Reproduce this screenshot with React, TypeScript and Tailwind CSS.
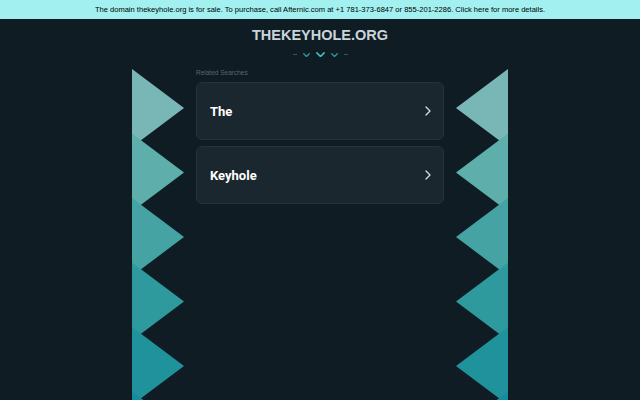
import React from "react";

const colors = ["#79b7b6", "#5eafac", "#45a4a3", "#2e9a9d", "#1f929c", "#168b9c"];

function Strip({ side }: { side: "left" | "right" }) {
  const tops = [0, 64.5, 129, 193.5, 258, 322.5];
  return (
    <svg width="52" height="331" viewBox="0 0 52 331" className="block shrink-0">
      {tops.map((t, i) => (
        <polygon
          key={i}
          fill={colors[i]}
          points={
            side === "left"
              ? `0,${t} 52,${t + 39} 0,${t + 78}`
              : `52,${t} 0,${t + 39} 52,${t + 78}`
          }
        />
      ))}
    </svg>
  );
}

function Chevron({ size, color }: { size: number; color: string }) {
  return (
    <svg width={size} height={size * 0.6} viewBox="0 0 10 6" fill="none">
      <path d="M1 1 L5 5 L9 1" stroke={color} strokeWidth="1.8" strokeLinecap="round" strokeLinejoin="round" />
    </svg>
  );
}

function Card({ label }: { label: string }) {
  return (
    <div className="flex h-[58px] items-center justify-between rounded-[6px] border border-[#243239] bg-[#1b272e] pl-[13px] pr-[12px]">
      <span className="text-[13px] font-bold text-white" style={{ fontFamily: "Roboto, 'Liberation Sans', sans-serif" }}>
        {label}
      </span>
      <svg width="6" height="10" viewBox="0 0 6 10" fill="none">
        <path d="M1 1 L5 5 L1 9" stroke="#d8dde0" strokeWidth="1.3" strokeLinecap="round" strokeLinejoin="round" />
      </svg>
    </div>
  );
}

export default function App() {
  return (
    <div
      className="h-[400px] w-[640px] overflow-hidden bg-[#0f1c24]"
      style={{ fontFamily: "'Liberation Sans', Arial, sans-serif" }}
    >
      <div className="flex h-[19px] items-center justify-center bg-[#a2f0f0] text-[7.55px] text-black">
        The domain thekeyhole.org is for sale. To purchase, call Afternic.com at +1 781-373-6847 or 855-201-2286. Click here for more details.
      </div>
      <div className="flex flex-col items-center pt-[8px]">
        <div className="text-[14.5px] font-bold leading-[16px] text-[#c9d5d9]">THEKEYHOLE.ORG</div>
        <div className="mt-[9px] flex items-center gap-[6px]">
          <div className="h-[1px] w-[4px] bg-[#3a5560]" />
          <Chevron size={7} color="#2a9aa3" />
          <Chevron size={9} color="#3fc0c8" />
          <Chevron size={7} color="#2a9aa3" />
          <div className="h-[1px] w-[4px] bg-[#3a5560]" />
        </div>
      </div>
      <div className="mt-[12px] flex justify-center gap-[12px]">
        <Strip side="left" />
        <div className="w-[248px]">
          <div className="mt-[-1px] text-[6.5px] leading-[10px] text-[#56676e]">Related Searches</div>
          <div className="mt-[4px] flex flex-col gap-[6px]">
            <Card label="The" />
            <Card label="Keyhole" />
          </div>
        </div>
        <Strip side="right" />
      </div>
    </div>
  );
}
